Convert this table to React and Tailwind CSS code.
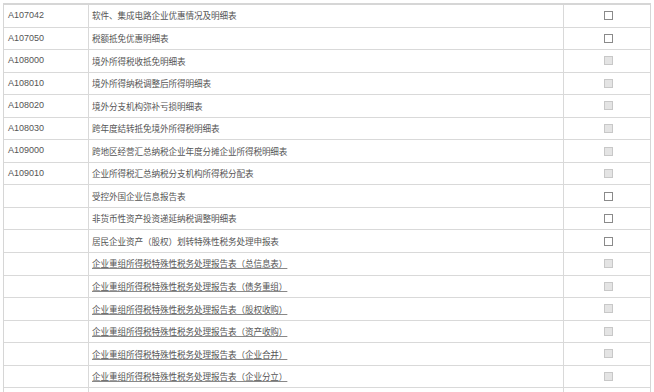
import React from "react";

const rows = [
  ["A107042", "软件、集成电路企业优惠情况及明细表", true, false],
  ["A107050", "税额抵免优惠明细表", true, false],
  ["A108000", "境外所得税收抵免明细表", false, false],
  ["A108010", "境外所得纳税调整后所得明细表", false, false],
  ["A108020", "境外分支机构弥补亏损明细表", false, false],
  ["A108030", "跨年度结转抵免境外所得税明细表", false, false],
  ["A109000", "跨地区经营汇总纳税企业年度分摊企业所得税明细表", false, false],
  ["A109010", "企业所得税汇总纳税分支机构所得税分配表", false, false],
  ["", "受控外国企业信息报告表", true, false],
  ["", "非货币性资产投资递延纳税调整明细表", true, false],
  ["", "居民企业资产（股权）划转特殊性税务处理申报表", true, false],
  ["", "企业重组所得税特殊性税务处理报告表（总信息表）", false, true],
  ["", "企业重组所得税特殊性税务处理报告表（债务重组）", false, true],
  ["", "企业重组所得税特殊性税务处理报告表（股权收购）", false, true],
  ["", "企业重组所得税特殊性税务处理报告表（资产收购）", false, true],
  ["", "企业重组所得税特殊性税务处理报告表（企业合并）", false, true],
  ["", "企业重组所得税特殊性税务处理报告表（企业分立）", false, true],
  ["", "", false, false],
];

export default function App() {
  return (
    <div className="w-[654px] h-[392px] overflow-hidden bg-white pl-[3px] pt-[3px]">
      <div
        className="w-[648px] border-l border-r border-t-2 border-[#d6d6d6] text-[#555]"
        style={{ fontFamily: '"Microsoft YaHei","Noto Sans CJK SC","Liberation Sans",sans-serif' }}
      >
        {rows.map(([code, name, enabled, link], i) => (
          <div
            key={i}
            className="grid grid-cols-[85px_475px_88px] h-[22.55px] border-b border-[#d9d9d9]"
          >
            <div
              className="flex items-center pl-[4px] text-[9px] border-r border-[#d9d9d9]"
              style={{ fontFamily: '"Liberation Sans",Arial,sans-serif' }}
            >
              {code}
            </div>
            <div className="flex items-center pl-[3px] border-r border-[#d9d9d9]">
              <span
                className={
                  "text-[8.6px] leading-none tracking-[-0.1px] " +
                  (link ? "underline decoration-[#888] underline-offset-[1px]" : "")
                }
              >
                {name}
              </span>
            </div>
            <div className="flex items-center justify-center">
              {name &&
                (enabled ? (
                  <div className="w-[9px] h-[9px] border border-[#8a8a8a] bg-white" />
                ) : (
                  <div className="w-[9px] h-[9px] border border-[#c8c8c8] bg-[#e4e4e4]" />
                ))}
            </div>
          </div>
        ))}
      </div>
    </div>
  );
}
